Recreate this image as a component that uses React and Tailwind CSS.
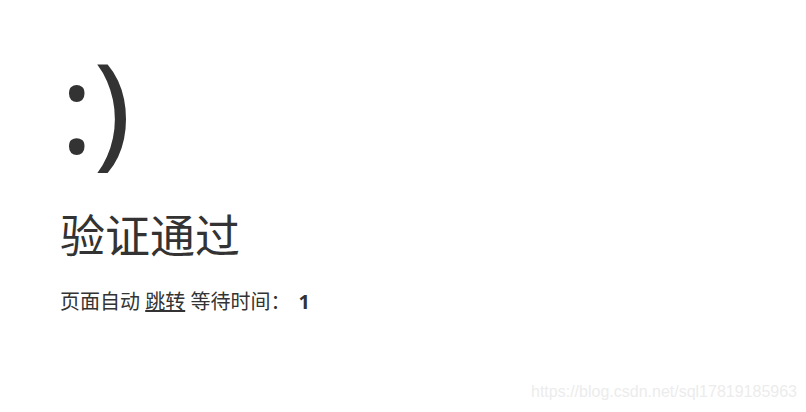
export default function App() {
  return (
    <div
      className="relative w-[806px] h-[412px] bg-white text-[#333] overflow-hidden"
      style={{ fontFamily: '"Noto Sans", "Noto Sans CJK SC", sans-serif' }}
    >
      <div className="px-[60px] pt-[30px]">
        <h1 className="text-[125px] font-normal leading-[150px] mb-[15px]">:)</h1>
        <p className="text-[45px] leading-[81px]">验证通过</p>
        <p className="pt-[12px] text-[20px] leading-[28px]">
          页面自动 <a className="underline text-[#333]">跳转</a> 等待时间：{' '}
          <b className="font-bold ml-[3px]">1</b>
        </p>
      </div>
      <div
        className="absolute right-[9px] bottom-[8px] text-[16px] text-[#ececec]"
        style={{ fontFamily: '"Liberation Sans", Arial, sans-serif' }}
      >
        https://blog.csdn.net/sql17819185963
      </div>
    </div>
  );
}
